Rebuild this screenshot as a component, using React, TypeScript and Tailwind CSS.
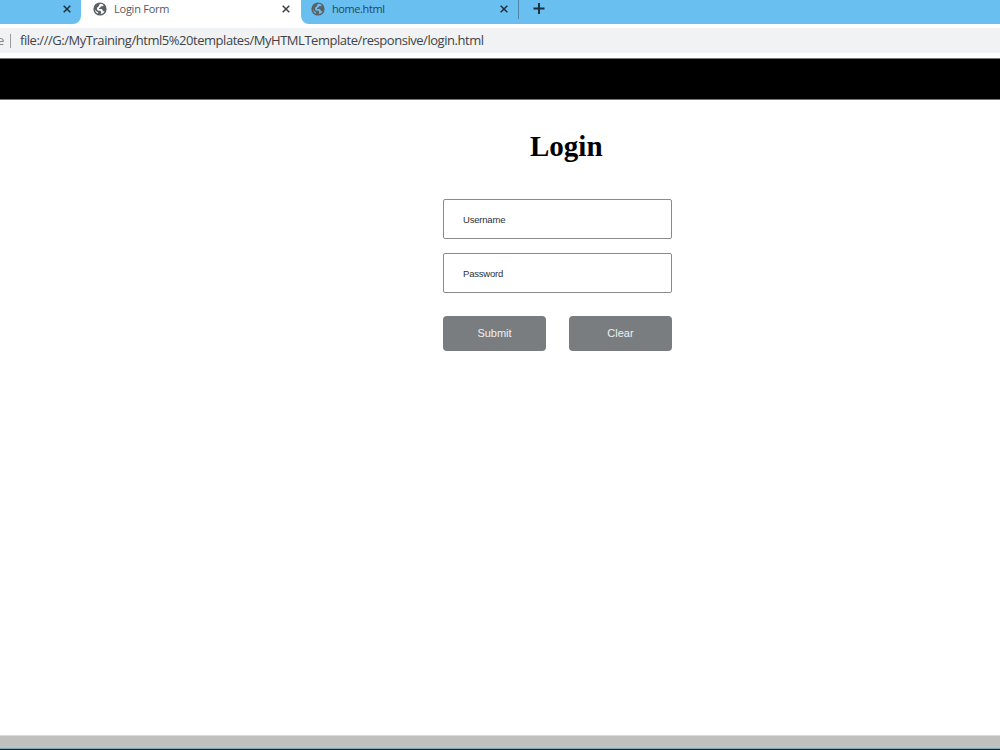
import { ReactNode } from "react";

function CloseIcon({ className }: { className?: string }) {
  return (
    <svg
      className={`block size-2 shrink-0 ${className ?? ""}`}
      viewBox="0 0 8 8"
      fill="none"
    >
      <path d="M0.7 0.7L7.3 7.3M7.3 0.7L0.7 7.3" stroke="currentColor" strokeWidth="1.5" />
    </svg>
  );
}

function GlobeIcon({ landClass }: { landClass: string }) {
  return (
    <svg className="block size-4 shrink-0" viewBox="0 0 16 16">
      <circle cx="8" cy="8" r="6.6" fill="#5b6065" />
      <path
        className={landClass}
        d="M8.6 2.8C9.9 2.9 11 3.4 11.8 4.3L10.6 5.2H9L8.3 6.5L7 7.1V8H9.6L10.8 9.2V10.2H12.6C11.8 12 10.3 12.9 8.8 13.1V12L9.3 10.9L8.4 9.8H6.4L5 8.4V6.7L6.8 5.3L7.2 3.8Z"
      />
      <path className={landClass} d="M2.9 8.8L4.5 10.2L6.1 11.3V12.7C4.3 12.2 3.1 10.6 2.9 8.8Z" />
    </svg>
  );
}

function TabTitle({ children, className, landClass }: { children: ReactNode; className: string; landClass: string }) {
  return (
    <div className="flex h-4 items-center gap-1.5">
      <GlobeIcon landClass={landClass} />
      <span className={`whitespace-nowrap text-[11px] leading-4 ${className}`}>{children}</span>
    </div>
  );
}

function TabStrip() {
  return (
    <div className="flex h-6 bg-white text-[#1d2f3b]">
      {/* Previous tab */}
      <div className="flex w-[81px] justify-end rounded-br-lg bg-[#68bff0] pt-[5px] pr-[10px]">
        <CloseIcon />
      </div>

      {/* Active tab */}
      <div className="flex w-[220px] justify-between px-[11px] pt-px">
        <TabTitle className="tracking-[-0.24px] text-[#55595d]" landClass="fill-white">
          Login Form
        </TabTitle>
        <CloseIcon className="mt-1 text-[#3c4043]" />
      </div>

      {/* Rest of the strip */}
      <div className="flex flex-1 rounded-bl-lg bg-[#68bff0]">
        <div className="flex h-[19px] w-[218px] justify-between border-r border-[#4b86a8] pt-px pr-[10px] pl-[9px]">
          <TabTitle className="tracking-[-0.4px] text-[#2b4556]" landClass="fill-[#68bff0]">
            home.html
          </TabTitle>
          <CloseIcon className="mt-1" />
        </div>
        <svg className="mt-[3px] ml-[14px] block h-[11px] w-[12px]" viewBox="0 0 12 11" fill="none">
          <path d="M6 0V11M0.5 5.5H11.5" stroke="currentColor" strokeWidth="1.9" />
        </svg>
      </div>
    </div>
  );
}

function AddressBar() {
  return (
    <div className="border-b border-[#777777] bg-white pt-1 pb-[5px]">
      <div className="flex h-[25px] items-center overflow-hidden bg-[#f1f2f4] text-[13px] whitespace-nowrap">
        <span className="-ml-[3px] w-[7px] text-[#85888b]">e</span>
        <span className="ml-[6px] h-3.5 w-px bg-[#999c9f]" />
        <span className="ml-[9px] tracking-[-0.46px] text-[#3f4347]">
          file:///G:/MyTraining/html5%20templates/MyHTMLTemplate/responsive/login.html
        </span>
      </div>
    </div>
  );
}

function Field({ type, label }: { type: string; label: string }) {
  return (
    <input
      type={type}
      placeholder={label}
      className="block h-10 w-full rounded-xs border border-[#8a8a8a] bg-white px-[19px] text-[9.5px] tracking-[-0.2px] text-[#2d2f38] outline-none placeholder:text-[#2d2f38]"
    />
  );
}

function FormButton({ type, children }: { type: "submit" | "reset"; children: ReactNode }) {
  return (
    <button
      type={type}
      className="h-[34.5px] w-[103px] rounded bg-[#7a7d80] text-[11px] text-[#f0f0f0]"
    >
      {children}
    </button>
  );
}

function LoginForm() {
  return (
    <main className="flex-1 pt-[29px]">
      <h1 className="ml-[530px] font-['Liberation_Serif',serif] text-[29px] leading-[34px] font-bold text-black">
        Login
      </h1>
      <form
        className="mt-9 ml-[443px] w-[229px] font-['Liberation_Sans',sans-serif]"
        onSubmit={(event) => event.preventDefault()}
      >
        <div className="flex flex-col gap-3.5">
          <Field type="text" label="Username" />
          <Field type="password" label="Password" />
        </div>
        <div className="mt-[23px] flex justify-between">
          <FormButton type="submit">Submit</FormButton>
          <FormButton type="reset">Clear</FormButton>
        </div>
      </form>
    </main>
  );
}

export default function App() {
  return (
    <div className="flex h-[750px] w-full flex-col overflow-hidden bg-white">
      <header className="font-['Open_Sans','Noto_Sans',sans-serif]">
        <TabStrip />
        <AddressBar />
      </header>
      <div className="h-[41px] border-b border-[#777777] bg-black" />
      <LoginForm />
      <footer className="h-[15px] border-t border-[#d9d9d9] bg-[#c0c0c0]">
        <div className="mt-[12px] h-0.5 border-t border-[#82a4b4] bg-[#052b40]" />
      </footer>
    </div>
  );
}
